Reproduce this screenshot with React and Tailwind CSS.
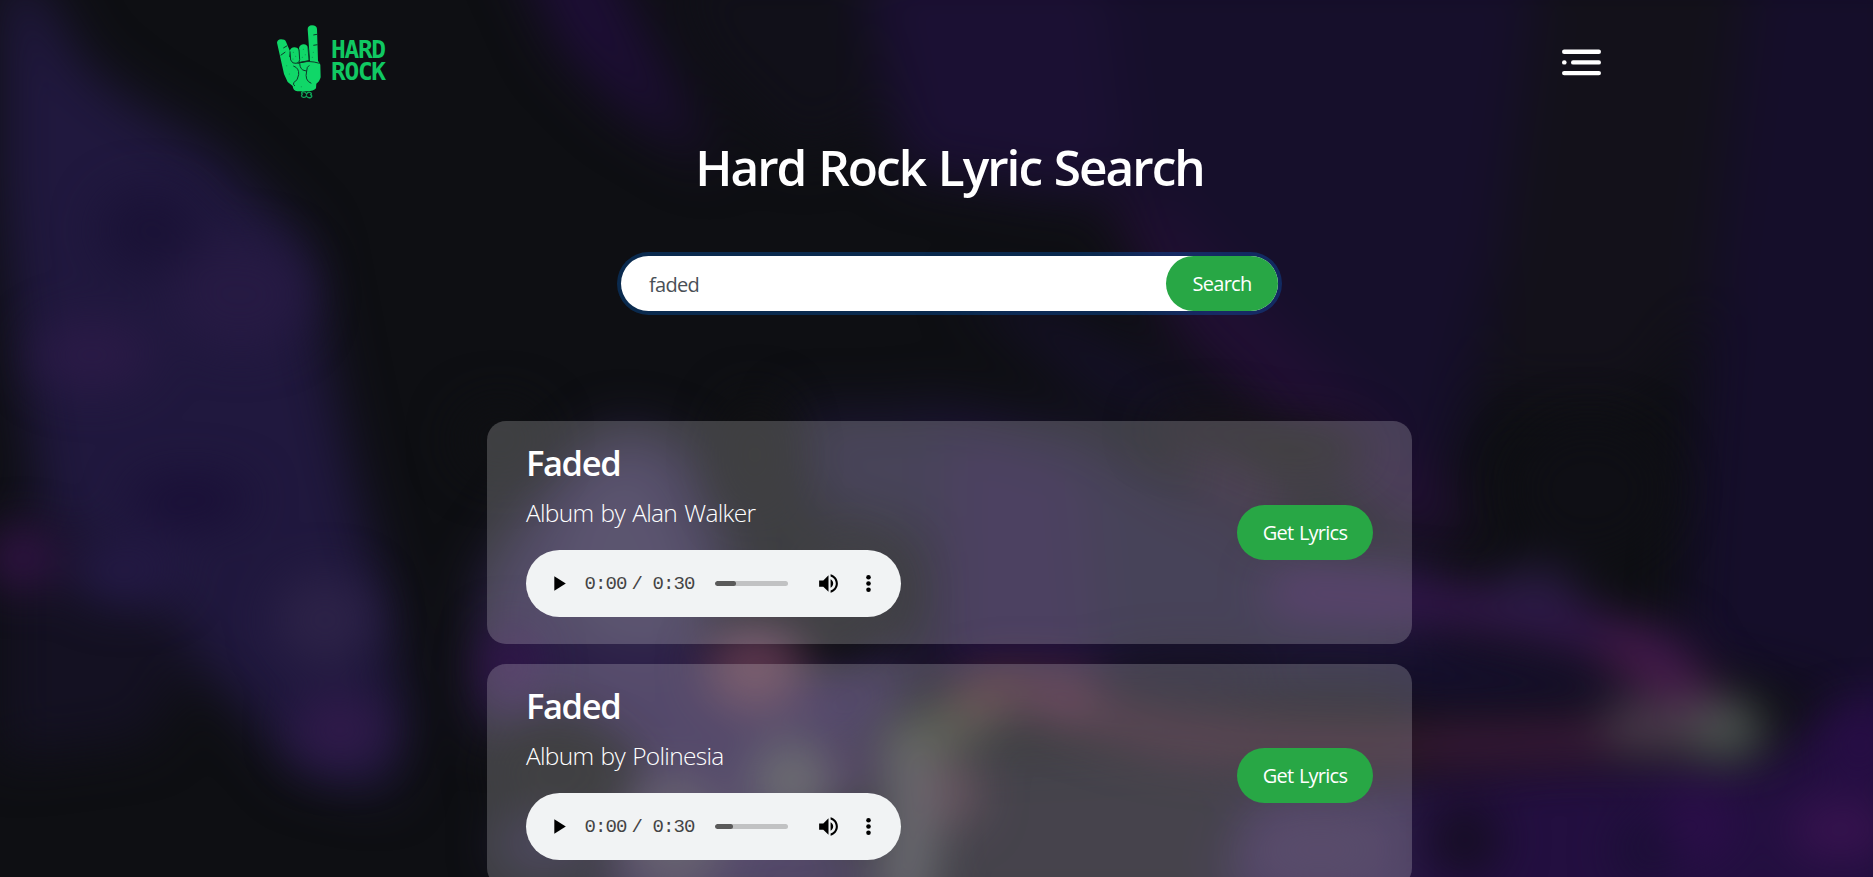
import React from "react";

const STAGE = [
  // left curtain
  { d: "M0 -40 L50 0 L80 60 L130 100 L215 150 L305 240 L330 370 L354 480 L386 600 L405 720 L388 795 L300 775 L235 700 L180 650 L80 640 L35 480 L8 280 L0 180 Z", c: "#20183e" },
  { d: "M0 500 L120 560 L200 640 L150 740 L0 760 Z", c: "#141122" },
  // top lights
  { d: "M510 -60 L600 -60 L660 60 L720 170 L620 110 L560 50 Z", c: "#1d0e35" },
  { d: "M660 -40 L860 -40 L880 120 L800 160 L700 60 Z", c: "#111019" },
  { d: "M860 -40 L1170 -40 L1180 150 L1080 200 L900 170 Z", c: "#1b1033" },
  { d: "M1100 -40 L1570 -40 L1510 200 L1460 460 L1380 500 L1240 320 L1130 200 Z", c: "#160f2b" },
  { d: "M1540 -40 L1760 -40 L1710 300 L1640 400 L1480 400 Z", c: "#13111a" },
  { d: "M1750 -40 L1920 -40 L1920 720 L1680 660 L1700 380 Z", c: "#150e2a" },
  { d: "M1100 190 L1160 205 L1270 320 L1380 420 L1480 520 L1420 545 L1300 450 L1180 340 Z", c: "#210f33" },
  { d: "M960 290 L1030 300 L1160 370 L1230 440 L1100 400 Z", c: "#151028" },
  // crowd haze
  { d: "M480 580 L550 480 L620 425 L690 450 L730 560 L700 670 L480 690 Z", c: "#292043" },
  { d: "M590 470 L640 460 L690 560 L700 650 L600 650 L550 570 Z", c: "#332b4c" },
  { d: "M790 410 L960 410 L920 540 L820 510 Z", c: "#1b1630" },
  { d: "M920 400 L1080 430 L1260 540 L1430 560 L1430 690 L930 690 Z", c: "#1a1430" },
  { d: "M950 430 L1080 470 L1100 690 L940 690 Z", c: "#20123a" },
  { d: "M1170 430 L1260 440 L1300 510 L1230 520 Z", c: "#251430" },
  { d: "M1400 630 L1640 680 L1720 710 L1400 710 Z", c: "#150f2e" },
  { d: "M480 650 L920 650 L890 740 L780 800 L920 900 L600 920 L640 770 L560 700 L480 740 Z", c: "#2b1d47" },
  { d: "M930 760 L1240 740 L1240 920 L940 920 Z", c: "#181520" },
  { d: "M1380 780 L1560 760 L1760 760 L1920 660 L1920 940 L1340 940 Z", c: "#230f40" },
  { d: "M1250 790 L1420 780 L1420 920 L1220 920 Z", c: "#2a1b45" },
];

const STREAKS = [
  { d: "M1290 592 Q1400 595 1500 614 T1670 655", c: "#33164c", w: 46 },
  { d: "M1620 650 L1700 695", c: "#471a4a", w: 42 },
  { d: "M1060 695 Q1110 735 1260 742 T1500 742", c: "#3a1b2f", w: 38 },
  { d: "M1440 744 Q1560 744 1680 732", c: "#3d1a3b", w: 40 },
  { d: "M1630 727 L1730 730", c: "#493a4a", w: 56 },
  { d: "M908 745 Q920 790 905 890", c: "#45454d", w: 56 },
  { d: "M925 738 L985 708", c: "#3c4232", w: 42 },
  { d: "M970 697 L1015 685", c: "#502630", w: 36 },
];

const SPOTS = [
  { x: 92, y: 355, rx: 60, ry: 35, c: "#2a1a46" },
  { x: 240, y: 295, rx: 70, ry: 55, c: "#261a43" },
  { x: 150, y: 230, rx: 50, ry: 40, c: "#1a1236" },
  { x: 190, y: 500, rx: 60, ry: 25, c: "#190f36" },
  { x: 22, y: 558, rx: 36, ry: 30, c: "#321345" },
  { x: 125, y: 570, rx: 55, ry: 35, c: "#231944" },
  { x: 325, y: 620, rx: 50, ry: 46, c: "#2c2247" },
  { x: 340, y: 730, rx: 48, ry: 34, c: "#301a4a" },
  { x: 510, y: 665, rx: 26, ry: 40, c: "#311449" },
  { x: 560, y: 770, rx: 70, ry: 36, c: "#121214" },
  { x: 545, y: 845, rx: 50, ry: 30, c: "#221c38" },
  { x: 500, y: 440, rx: 44, ry: 38, c: "#0f1013" },
  { x: 755, y: 455, rx: 36, ry: 60, c: "#111113" },
  { x: 850, y: 590, rx: 50, ry: 50, c: "#14131a" },
  { x: 830, y: 640, rx: 40, ry: 24, c: "#111114" },
  { x: 755, y: 668, rx: 50, ry: 42, c: "#5a364b" },
  { x: 792, y: 780, rx: 42, ry: 40, c: "#48484f" },
  { x: 675, y: 835, rx: 50, ry: 60, c: "#413b4c" },
  { x: 953, y: 793, rx: 26, ry: 32, c: "#452c3a" },
  { x: 850, y: 770, rx: 20, ry: 28, c: "#2f184a" },
  { x: 1062, y: 697, rx: 34, ry: 28, c: "#4a2038" },
  { x: 1190, y: 672, rx: 90, ry: 16, c: "#151120" },
  { x: 1300, y: 450, rx: 70, ry: 26, c: "#121212" },
  { x: 1210, y: 430, rx: 60, ry: 18, c: "#121114" },
  { x: 1535, y: 592, rx: 45, ry: 26, c: "#291b42" },
  { x: 1590, y: 490, rx: 80, ry: 70, c: "#0f0f15" },
  { x: 1728, y: 730, rx: 36, ry: 32, c: "#4d5551" },
  { x: 1840, y: 830, rx: 50, ry: 28, c: "#391350" },
  { x: 1860, y: 745, rx: 40, ry: 36, c: "#270d45" },
  { x: 1695, y: 825, rx: 40, ry: 36, c: "#2b0e49" },
  { x: 1465, y: 840, rx: 36, ry: 36, c: "#150e22" },
  { x: 1645, y: 850, rx: 28, ry: 34, c: "#1a0f34" },
  { x: 1320, y: 850, rx: 70, ry: 30, c: "#312046" },
];

function Backdrop() {
  return (
    <svg className="absolute inset-0 h-full w-full" viewBox="0 0 1873 877" preserveAspectRatio="none" aria-hidden="true">
      <defs>
        <filter id="haze" filterUnits="userSpaceOnUse" x="-150" y="-150" width="2200" height="1200" colorInterpolationFilters="sRGB">
          <feGaussianBlur stdDeviation="26" />
        </filter>
        <filter id="glow" filterUnits="userSpaceOnUse" x="-150" y="-150" width="2200" height="1200" colorInterpolationFilters="sRGB">
          <feGaussianBlur stdDeviation="23" />
        </filter>
      </defs>
      <rect width="1873" height="877" fill="#0e0f13" />
      <g filter="url(#haze)">
        {STAGE.map((s, i) => (
          <path key={i} d={s.d} fill={s.c} />
        ))}
      </g>
      <g filter="url(#glow)">
        {STREAKS.map((s, i) => (
          <path key={i} d={s.d} fill="none" stroke={s.c} strokeWidth={s.w} strokeLinecap="round" />
        ))}
        {SPOTS.map((s, i) => (
          <ellipse key={i} cx={s.x} cy={s.y} rx={s.rx} ry={s.ry} fill={s.c} />
        ))}
      </g>
    </svg>
  );
}

function Logo() {
  return (
    <a href="#" className="flex items-center">
      <svg className="h-[75px] w-[47px]" viewBox="45 40 141 225" fill="#10d768">
        <path d="M51 96 Q52 87 63 86 Q75 86 78 93 L90 122 L88 138 L110 160 L150 152 L143 56 Q143 45 156 44 Q170 44 171 55 L174 150 L181 162 L182 200 Q178 214 169 219 L168 233 Q160 243 138 242 L112 242 Q99 240 98 226 L83 214 L72 190 Z" />
        <path d="M89 122 Q92 110 103 110 Q114 110 117 120 L120 150 Q116 160 104 160 Q93 158 91 146 Z" />
        <path d="M117 112 Q120 101 131 101 Q142 102 144 112 L148 148 L119 154 Z" />
        <path d="M62 134 L76 124 M70 112 L82 105 M160 73 L171 71 M160 104 L173 102 M90 122 L92 148 Q97 160 108 158 Q119 157 119 147 L117 116 M144 110 L147 150 M118 156 Q145 148 179 158 M119 158 Q120 178 135 180 L140 181 Q140 168 148 164 M140 181 Q133 210 154 218 M100 166 Q118 172 116 192 Q114 210 101 216 Q99 224 105 226" fill="none" stroke="#0d3a2a" strokeWidth="3" />
        <path d="M128 243 Q122 247 127 250 Q121 258 130 260 Q137 261 139 256 Q144 264 153 260 Q158 256 152 252 Q157 247 149 245 Q143 244 140 250 Q136 243 128 243 Z" fill="none" stroke="#0fa558" strokeWidth="4" />
        <g fill="#0a8b49">
          <circle cx="100" cy="125" r="1.5" />
          <circle cx="107" cy="137" r="1.5" />
          <circle cx="99" cy="145" r="1.5" />
          <circle cx="130" cy="116" r="1.5" />
          <circle cx="136" cy="132" r="1.5" />
          <circle cx="127" cy="140" r="1.5" />
          <circle cx="160" cy="125" r="1.5" />
          <circle cx="157" cy="140" r="1.5" />
          <circle cx="80" cy="165" r="1.5" />
          <circle cx="88" cy="190" r="1.5" />
          <circle cx="124" cy="228" r="1.5" />
        </g>
      </svg>
      <span className="-mt-px ml-[9px] flex w-[54px] flex-col font-['DejaVu_Sans_Mono',monospace] text-[24.5px] leading-[22px] font-bold tracking-[-1.3px] text-[#10c962]">
        <span>HARD</span>
        <span>ROCK</span>
      </span>
    </a>
  );
}

function MenuIcon() {
  return (
    <svg className="mt-px mr-px h-[27px] w-[39px]" viewBox="0 0 39 27" fill="#fff">
      <rect x="0" y="0.5" width="39" height="4.400" rx="2.2" />
      <rect x="0" y="11.2" width="4.600" height="4.400" rx="2.2" />
      <rect x="9" y="11.2" width="30" height="4.400" rx="2.2" />
      <rect x="0" y="21.9" width="39" height="4.400" rx="2.2" />
    </svg>
  );
}

function Player({ fill }) {
  return (
    <div className="mt-[23px] flex h-[67px] w-[375px] items-center rounded-full bg-[#f1f3f4] pl-5">
      <svg className="h-[25px] w-[25px] shrink-0" viewBox="0 0 24 24">
        <path d="M8 5v14l11-7z" />
      </svg>
      <div className="ml-[13.5px] flex font-['Liberation_Mono',monospace] text-[19px] leading-6 tracking-[-0.9px] text-[#444]">
        <span className="w-[47px]">0:00</span>
        <span className="w-[21px]">/</span>
        <span className="w-[44px]">0:30</span>
      </div>
      <div className="ml-[18px] h-[5px] w-[73px] shrink-0 overflow-hidden rounded-full bg-[#c1c2c3]">
        <div className="h-full rounded-full bg-[#5a5a5a]" style={{ width: fill }} />
      </div>
      <svg className="ml-[28px] h-[25px] w-[25px] shrink-0" viewBox="0 0 24 24">
        <path d="M3 9v6h4l5 5V4L7 9H3zm13.500 3c0-1.770-1.020-3.290-2.500-4.030v8.050c1.480-.73 2.500-2.250 2.500-4.020zM14 3.230v2.060c2.890.86 5 3.540 5 6.710s-2.110 5.850-5 6.710v2.060c4.010-.91 7-4.490 7-8.770s-2.990-7.860-7-8.770z" />
      </svg>
      <svg className="ml-[15px] h-[25px] w-[25px] shrink-0" viewBox="0 0 24 24">
        <circle cx="12" cy="6" r="2.200" />
        <circle cx="12" cy="12" r="2.200" />
        <circle cx="12" cy="18" r="2.200" />
      </svg>
    </div>
  );
}

function SongCard({ title, artist, fill }) {
  return (
    <article className="flex h-[223px] w-[925px] shrink-0 items-center justify-between rounded-[19px] bg-white/20 px-[39px]">
      <div className="h-full pt-[21px]">
        <h3 className="text-[34.5px] leading-[42px] font-[640] tracking-[-1.4px]">{title}</h3>
        <p className="mt-[14px] text-[24.5px] leading-[30px] font-[320] tracking-[-0.7px] [word-spacing:1.5px]">Album by {artist}</p>
        <div className="-mt-px">
          <Player fill={fill} />
        </div>
      </div>
      <button className="h-[55px] w-[136px] rounded-full bg-[#28a745] pt-px text-[20px] tracking-[-0.75px] [word-spacing:1px]">Get Lyrics</button>
    </article>
  );
}

export default function App() {
  return (
    <div className="relative h-[877px] overflow-hidden bg-[#0e0f13] font-['Open_Sans','Noto_Sans',sans-serif] text-white">
      <Backdrop />
      <div className="relative">
        <header className="flex h-[123px] items-center justify-between pr-[271px] pl-[275px]">
          <Logo />
          <MenuIcon />
        </header>
        <main className="ml-[26px] flex flex-col items-center">
          <h1 className="mt-[14px] text-[49.5px] leading-[60px] font-[640] tracking-[-2px] whitespace-nowrap [word-spacing:2px]">Hard Rock Lyric Search</h1>
          <form className="mt-[59px] flex h-[55px] w-[657px] items-center justify-between rounded-full bg-white pl-7 shadow-[0_0_0_4px_rgba(0,123,255,0.25)]">
            <span className="pt-[2px] text-[20px] tracking-[-0.7px] text-[#495057]">faded</span>
            <button type="button" className="h-[55px] w-[112px] rounded-full bg-[#28a745] pt-px text-[20px] tracking-[-0.75px]">Search</button>
          </form>
          <section className="mt-[110px] flex flex-col gap-5">
            <SongCard title="Faded" artist="Alan Walker" fill="30%" />
            <SongCard title="Faded" artist="Polinesia" fill="25%" />
          </section>
        </main>
      </div>
    </div>
  );
}
